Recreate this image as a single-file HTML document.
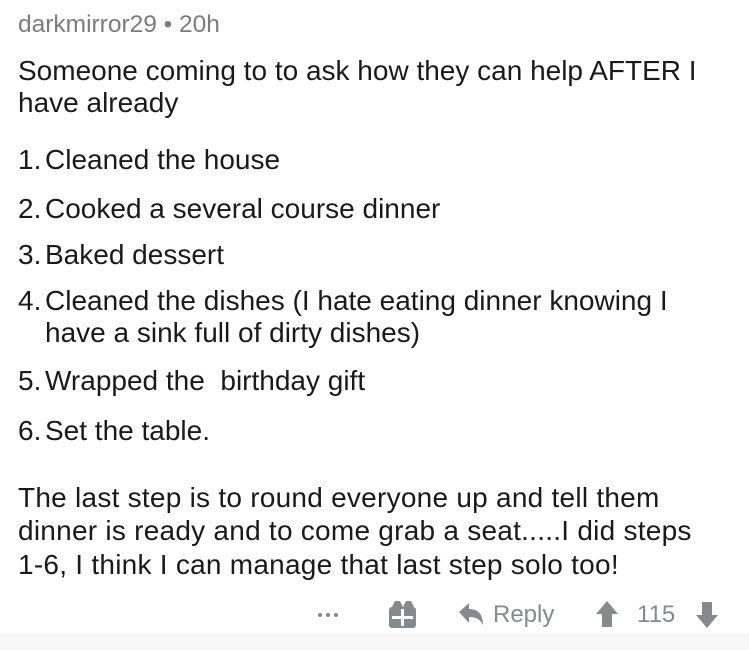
<!DOCTYPE html>
<html><head><style>
body{margin:0;width:749px;height:650px;background:#fff;font-family:"Liberation Sans",sans-serif;color:#1a1a1b;position:relative;overflow:hidden}
.t{position:absolute;left:18px;font-size:28px;white-space:nowrap;line-height:32px}
.p{letter-spacing:0.25px}
.h{position:absolute;left:18px;top:11px;font-size:24.5px;color:#7c7c7c}
.bar{position:absolute;top:601px;font-size:24px;color:#878a8c}
.foot{position:absolute;left:0;right:0;top:633px;height:17px;background:#f8f8f8}
.n{display:inline-block;width:27px}
</style></head><body>
<div class="h">darkmirror29 • 20h</div>
<div class="t" style="top:55px">Someone coming to to ask how they can help AFTER I</div>
<div class="t" style="top:87px">have already</div>
<div class="t" style="top:144px"><span class="n">1.</span>Cleaned the house</div>
<div class="t" style="top:193px"><span class="n">2.</span>Cooked a several course dinner</div>
<div class="t" style="top:239px"><span class="n">3.</span>Baked dessert</div>
<div class="t" style="top:285px"><span class="n">4.</span>Cleaned the dishes (I hate eating dinner knowing I</div>
<div class="t" style="top:317px;left:45px">have a sink full of dirty dishes)</div>
<div class="t" style="top:365px"><span class="n">5.</span>Wrapped the &nbsp;birthday gift</div>
<div class="t" style="top:415px"><span class="n">6.</span>Set the table.</div>
<div class="t p" style="top:482px">The last step is to round everyone up and tell them</div>
<div class="t p" style="top:515px">dinner is ready and to come grab a seat.....I did steps</div>
<div class="t p" style="top:549px">1-6, I think I can manage that last step solo too!</div>
<svg style="position:absolute;left:0;top:580px" width="749" height="55">
<g fill="#878a8c">
<circle cx="320" cy="35" r="2"/><circle cx="328" cy="35" r="2"/><circle cx="336" cy="35" r="2"/>
<rect x="389" y="27" width="27" height="21" rx="3"/>
<path d="M392 27 l3-6 h5 l3 6z M403 27 l3-6 h5 l3 6z"/>
<rect x="401" y="29" width="3" height="17" fill="#fff"/>
<rect x="392" y="36" width="21" height="3" fill="#fff"/>
<path d="M459 32 l10-9 v6 c8 0 14 4 14 16 c-3-6-7-8-14-8 v6z"/>
<path d="M607 21 l-11 13 h6 v13 h10 v-13 h6z"/>
<path d="M707 48 l-11-13 h6 v-13 h10 v13 h6z"/>
</g></svg>
<div class="bar" style="left:493px">Reply</div>
<div class="bar" style="left:637px">115</div>
<div class="foot"></div>
</body></html>
